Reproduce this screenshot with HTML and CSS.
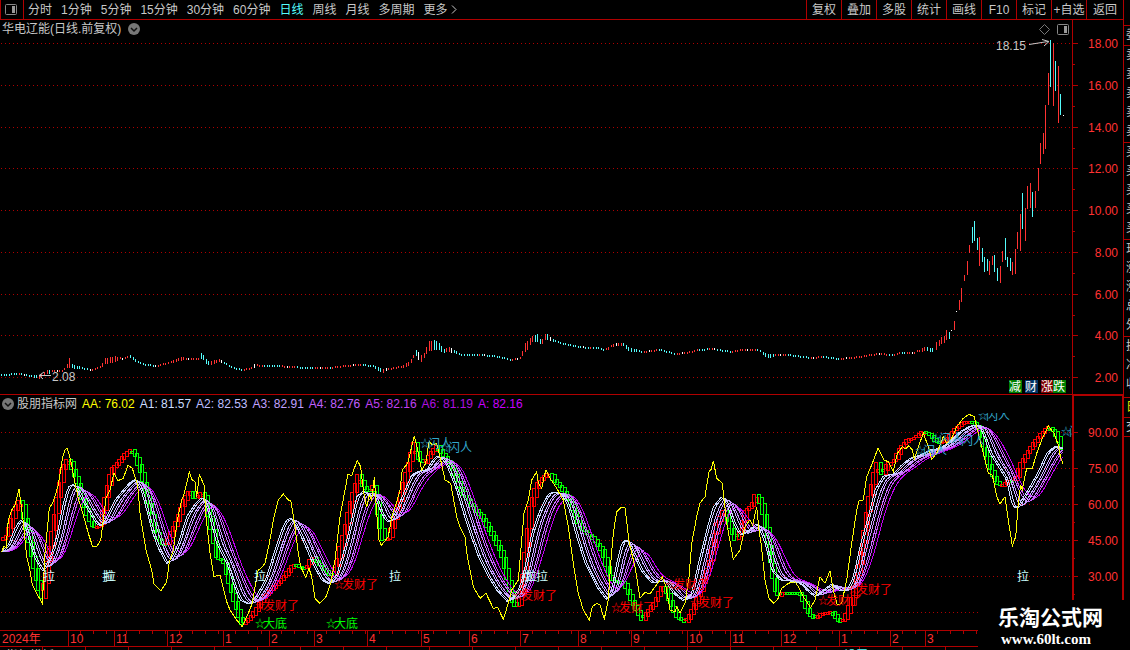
FILE: index.html
```
<!DOCTYPE html>
<html lang="zh-CN">

<head>
    <meta charset="UTF-8">
    <meta name="viewport" content="width=device-width, initial-scale=1.0">
    <title>华电辽能 日线</title>
    <link rel="stylesheet" href="styles.css">
</head>

<body>
    <div class="app">
        <main class="main">
            <nav class="toolbar">
                <button class="layout-btn" aria-label="布局">
                    <svg width="12" height="11" viewBox="0 0 12 11"><rect x="0.5" y="0.5" width="11" height="10" rx="1" fill="none" stroke="#888"/><rect x="7" y="2" width="3" height="7" fill="#999"/></svg>
                </button>
                <div class="periods">
                    <button>分时</button>
                    <button>1分钟</button>
                    <button>5分钟</button>
                    <button>15分钟</button>
                    <button>30分钟</button>
                    <button>60分钟</button>
                    <button class="active">日线</button>
                    <button>周线</button>
                    <button>月线</button>
                    <button>多周期</button>
                    <button class="more">更多<svg width="6" height="9" viewBox="0 0 6 9"><path d="M1 0.5 L5 4.5 L1 8.5" fill="none" stroke="#c8c8c8"/></svg></button>
                </div>
                <div class="tools">
                    <button>复权</button>
                    <button>叠加</button>
                    <button>多股</button>
                    <button>统计</button>
                    <button>画线</button>
                    <button>F10</button>
                    <button>标记</button>
                    <button>+自选</button>
                    <button>返回</button>
                </div>
            </nav>

            <section class="pane price">
                <div class="plot-col">
                    <header class="pane-title">
                        <span>华电辽能(日线.前复权)</span>
                        <svg class="fold" width="12" height="12" viewBox="0 0 12 12"><circle cx="6" cy="6" r="6" fill="#777"/><path d="M3 5 L6 8 L9 5" fill="none" stroke="#111" stroke-width="1.5"/></svg>
                        <span class="corner">
                            <svg width="11" height="11" viewBox="0 0 11 11"><path d="M5.5 0.5 L10.5 5.5 L5.5 10.5 L0.5 5.5 Z" fill="none" stroke="#777"/></svg>
                            <svg width="12" height="11" viewBox="0 0 12 11"><rect x="0.5" y="0.5" width="11" height="10" rx="1" fill="none" stroke="#888"/><rect x="7" y="2" width="3" height="7" fill="#999"/></svg>
                        </span>
                    </header>
                    <svg id="priceChart" class="price-chart" viewBox="0 38 1072 356" preserveAspectRatio="none"></svg>
                </div>
                <svg id="priceAxis" class="axis" viewBox="1072 20 51 374" preserveAspectRatio="none"></svg>
            </section>

            <section class="pane indicator">
                <div class="plot-col">
                    <header class="pane-title">
                        <svg class="fold" width="12" height="12" viewBox="0 0 12 12"><circle cx="6" cy="6" r="6" fill="#777"/><path d="M3 5 L6 8 L9 5" fill="none" stroke="#111" stroke-width="1.5"/></svg>
                        <span class="name">股朋指标网</span>
                        <span class="aa">AA: 76.02</span>
                        <span class="a1">A1: 81.57</span>
                        <span class="a2">A2: 82.53</span>
                        <span class="a3">A3: 82.91</span>
                        <span class="a4">A4: 82.76</span>
                        <span class="a5">A5: 82.16</span>
                        <span class="a6">A6: 81.19</span>
                        <span class="a7">A: 82.16</span>
                    </header>
                    <svg id="waveChart" class="wave-chart" viewBox="0 413 1072 217" preserveAspectRatio="none"></svg>
                </div>
                <svg id="waveAxis" class="axis" viewBox="1072 395 51 235" preserveAspectRatio="none"></svg>
            </section>

            <div class="dates" id="dates"></div>
            <footer class="status"><span>指标模板</span><span class="link">设置</span></footer>
        </main>

        <aside class="quote">
            <div class="q1">委比</div>
            <div class="q5"><span>卖五</span><span>卖四</span><span>卖三</span><span>卖二</span><span>卖一</span></div>
            <div class="q5"><span>买一</span><span>买二</span><span>买三</span><span>买四</span><span>买五</span></div>
            <div class="q5"><span>现价</span><span>涨跌</span><span>涨幅</span><span>总量</span><span>外盘</span></div>
            <div class="q3"><span>换手</span><span>净资</span><span>收益</span></div>
            <div class="q1 day">日</div>
            <div class="q1 last">交</div>
        </aside>
    </div>

    <div class="watermark">
        <strong>乐淘公式网</strong>
        <span>www.60lt.com</span>
    </div>

    <script src="chart.js"></script>
</body>

</html>
```
FILE: styles.css
```
body {
    margin: 0;
    background-color: #000;
    color: #c8c8c8;
    font-family: "Liberation Sans", "Noto Sans CJK SC", sans-serif;
    font-size: 12px;
    line-height: 18px;
    overflow: hidden;
}

button {
    border: 0;
    padding: 0;
    background: none;
    color: #c8c8c8;
    font: inherit;
    white-space: nowrap;
}

svg {
    display: block;
}

.app {
    display: flex;
    height: 100vh;
    overflow: hidden;
}

.main {
    flex: 1;
    min-width: 0;
    display: flex;
    flex-direction: column;
}

/* toolbar */
.toolbar {
    display: flex;
    height: 19px;
    flex: none;
    border-bottom: 1px solid #b00000;
}

.layout-btn {
    width: 24px;
    box-sizing: border-box;
    border-left: 1px solid #b00000;
    border-right: 1px solid #b00000;
    padding-left: 4px;
}

.periods {
    display: flex;
    flex: 1;
    gap: 9px;
    padding-left: 4px;
}

.periods .active {
    color: #54fcfc;
}

.periods .more {
    display: flex;
    align-items: center;
    gap: 3px;
}

.tools {
    display: flex;
}

.tools button {
    width: 35px;
    box-sizing: border-box;
    border-left: 1px solid #b00000;
}

.tools button:last-child {
    width: 37px;
}

/* panes */
.pane {
    display: flex;
    flex: none;
}

.plot-col {
    flex: 1;
    min-width: 0;
}

.pane-title {
    display: flex;
    align-items: center;
    height: 18px;
    gap: 5px;
    padding: 0 3px 0 2px;
    white-space: nowrap;
}

.corner {
    display: flex;
    gap: 7px;
    margin-left: auto;
}

.price {
    border-bottom: 1px solid #b00000;
}

.price .pane-title {
    gap: 7px;
}

.price-chart {
    width: 100%;
    height: 356px;
}

.wave-chart {
    width: 100%;
    height: 217px;
}

.axis {
    flex: none;
    width: 51px;
}

.price .axis {
    height: 374px;
}

.indicator .axis {
    height: 235px;
}

.indicator .fold {
    margin-right: -2px;
}

.aa { color: #ffff00; }
.a1 { color: #ccddff; }
.a2 { color: #bfbfff; }
.a3 { color: #c0a0ff; }
.a4 { color: #c060ff; }
.a5 { color: #c040f0; }
.a6 { color: #b010e0; }
.a7 { color: #c800ff; }

.chart-text {
    font-size: 12px;
}

.star {
    font-size: 10px;
}

/* date row */
.dates {
    display: flex;
    flex: none;
    height: 15px;
    line-height: 17px;
    border-top: 1px solid #b00000;
    border-bottom: 1px solid #b00000;
    color: #ff3030;
}

.dates span {
    flex-basis: 0;
    min-width: 0;
    text-indent: 2px;
    box-shadow: inset 1px 0 #b00000;
    white-space: nowrap;
    background: repeating-linear-gradient(90deg, transparent 0 12px, #b00000 12px 13px) 0 0 / 100% 3px no-repeat;
}

.dates span:first-child {
    box-shadow: none;
    background: none;
}

.status {
    display: flex;
    gap: 790px;
    flex: 1;
    padding-left: 6px;
    line-height: 18px;
    overflow: hidden;
    background: repeating-linear-gradient(90deg, transparent 0 42px, #b00000 42px 43px);
}

.status .link {
    color: #54fcfc;
}

/* quote strip */
.quote {
    flex: none;
    width: 6px;
    padding-top: 25px;
    border-left: 1px solid #b00000;
    overflow: hidden;
}

.quote div {
    display: flex;
    flex-direction: column;
    box-sizing: border-box;
    width: 60px;
    padding-left: 2px;
    border-top: 1px solid #b00000;
}

.q1 {
    height: 20px;
}

.q5 {
    height: 97px;
    line-height: 19px;
}

.q3 {
    height: 61px;
    line-height: 19px;
}

.quote .day {
    color: #e0e000;
}

.quote .last {
    border-bottom: 1px solid #b00000;
}

/* site mark over the corner */
.watermark {
    position: absolute;
    right: 0;
    bottom: 0;
    width: 138px;
    height: 44px;
    padding: 6px 0 0 14px;
    background-color: #000;
    color: #fff;
}

.watermark strong {
    display: block;
    margin-left: 6px;
    font-size: 21px;
    line-height: 24px;
}

.watermark span {
    display: block;
    margin-left: 9px;
    font-family: "Liberation Serif", serif;
    font-size: 15px;
    line-height: 18px;
    font-weight: bold;
}
```
FILE: chart.js
```
const RED = '#ff3232';
const CYAN = '#54fcfc';
const GRID = '#b00000';

// control points of the flat part of the price: x, y, half height
const trend = [
    [1, 375, 1], [20, 374, 1], [32, 376, 1], [40, 377, 2], [47, 372, 2], [62, 371, 1], [67, 366, 2], [69, 363, 5], [72, 366, 2], [85, 369, 1],
    [93, 370, 1], [100, 367, 1], [105, 361, 3], [115, 359, 3], [122, 359, 1], [130, 357, 2], [137, 361, 1], [145, 365, 1],
    [158, 366, 1], [170, 362, 1], [182, 359, 2], [190, 359, 1], [198, 359, 1], [201, 356, 3], [208, 363, 2], [220, 361, 2],
    [230, 367, 1], [242, 370, 1], [252, 368, 1], [255, 366, 3], [258, 366, 1], [275, 366, 1], [290, 367, 1], [310, 368, 1],
    [330, 368, 1], [345, 366, 1], [360, 365, 1], [372, 366, 1], [378, 369, 2], [381, 372, 3], [390, 369, 1], [400, 367, 1],
    [408, 364, 2], [412, 360, 2], [415, 352, 2], [417, 355, 5], [420, 360, 4], [424, 356, 3], [428, 346, 5], [434, 345, 5],
    [438, 346, 4], [444, 351, 2], [450, 350, 3], [460, 355, 1], [480, 355, 1], [500, 357, 1], [510, 360, 1], [520, 358, 1],
    [524, 349, 5], [528, 344, 4], [533, 338, 3], [537, 338, 4], [541, 342, 2], [546, 337, 4], [552, 341, 2], [560, 343, 1],
    [580, 347, 1], [590, 348, 1], [597, 348, 1], [604, 350, 1], [615, 345, 2], [623, 345, 2], [628, 349, 2], [642, 352, 1],
    [660, 350, 1], [675, 354, 1], [687, 353, 1], [697, 350, 1], [713, 349, 1], [730, 352, 1], [743, 350, 1], [758, 350, 1],
    [767, 356, 2], [787, 355, 1], [810, 358, 1], [823, 357, 1], [838, 359, 1], [860, 357, 1], [877, 354, 1], [893, 355, 1],
    [900, 353, 1], [913, 353, 1], [925, 349, 2], [934, 350, 2]
];

// the big candles: x, top, bottom, colour
const candles = [
    [936, 342, 350, 'r'], [939, 340, 346, 'r'], [941, 337, 344, 'r'], [944, 336, 343, 'r'], [946, 330, 340, 'r'],
    [949, 332, 339, 'c'], [951, 330, 331, 'w'], [954, 321, 330, 'r'], [956, 311, 312, 'w'], [959, 300, 310, 'r'],
    [961, 288, 302, 'r'], [964, 275, 281, 'r'], [967, 261, 275, 'r'], [969, 245, 253, 'r'], [972, 227, 243, 'c'],
    [974, 221, 241, 'c'], [977, 238, 250, 'c'], [979, 237, 266, 'r'], [982, 248, 262, 'c'], [984, 257, 272, 'c'],
    [987, 259, 271, 'c'], [989, 261, 275, 'r'], [992, 256, 265, 'r'], [994, 255, 272, 'c'], [997, 268, 281, 'c'],
    [1000, 266, 283, 'r'], [1002, 251, 262, 'r'], [1005, 238, 260, 'c'], [1007, 257, 267, 'c'], [1010, 258, 271, 'c'],
    [1012, 262, 275, 'r'], [1015, 249, 274, 'r'], [1017, 232, 249, 'r'], [1020, 214, 251, 'r'], [1022, 193, 229, 'c'],
    [1025, 208, 241, 'r'], [1027, 186, 209, 'r'], [1030, 183, 208, 'r'], [1032, 192, 217, 'c'], [1035, 191, 208, 'r'],
    [1038, 168, 191, 'r'], [1040, 143, 164, 'r'], [1043, 133, 154, 'r'], [1045, 105, 149, 'r'], [1048, 73, 105, 'r'],
    [1050, 40, 87, 'c'], [1053, 43, 106, 'r'], [1055, 61, 91, 'c'], [1058, 66, 123, 'r'], [1060, 94, 115, 'c'],
    [1063, 115, 116, 'w']
];

// every curve is kept as four strips; offsets of a strip, then its points in thirds of a pixel
function join(strips) {
    const out = [];
    strips.forEach(([dx, dy, pts]) => {
        pts.trim().split(/\s+/).forEach(p => {
            const [x, y] = p.split(',').map(Number);
            out.push([dx + x / 3, dy + y / 3]);
        });
    });
    return out;
}

const yellow = join([
    [0, 420, '5,395 12,378 18,385 25,300 35,270 45,255 57,208 68,290 80,410 88,440 97,495 110,520 127,550 135,400 148,265 160,245 175,195 188,110 195,90 202,85 212,120 222,175 235,235 250,285 265,340 278,380 290,380 302,360 310,300 318,235 330,210 342,160 354,182 370,175 384,136 397,145 413,195 420,280 438,390 455,450 462,492 483,512 500,485 508,425 520,390 532,300 545,240 553,220 568,157 575,178 585,185 590,232 598,163 612,195 618,290 630,400 642,470 660,465 680,545 690,570 710,600 727,620 745,580 757,550 765,500 775,450'],
    [260, 420, '3,445 15,430 28,370 42,290 55,240 70,222 85,240 92,240 105,320 115,400 122,440 137,472 147,445 155,470 165,535 180,550 198,530 212,490 225,420 240,290 255,210 264,163 275,167 292,121 302,140 310,210 320,262 328,225 335,240 343,172 350,280 357,360 364,376 385,350 395,290 412,240 420,210 427,150 443,130 455,80 463,48 473,90 485,150 497,130 507,65 517,75 530,70 542,120 555,180 572,190 590,290 600,320 615,350 622,410 640,500 660,535 678,520 700,565 713,562 730,598 745,550'],
    [510, 420, '5,510 15,495 25,480 35,360 42,280 55,240 65,180 80,155 85,190 95,205 101,175 108,150 120,175 140,205 160,240 175,320 190,430 205,520 220,570 238,600 247,560 260,550 270,555 283,597 295,540 302,430 310,340 320,275 333,262 345,263 358,370 375,440 390,535 405,517 420,522 435,500 457,472 468,500 480,570 495,575 500,560 510,578 525,550 537,470 545,370 560,290 570,250 585,230 597,155 604,148 610,122 620,175 637,190 650,310 670,418 690,390 705,320 720,300 728,315 740,260 748,340'],
    [760, 400, '2,420 15,540 27,595 42,610 55,595 65,565 85,550 105,545 118,565 130,590 152,623 165,600 180,530 195,550 210,513 220,570 232,615 245,610 260,540 275,430 290,330 297,302 310,300 320,230 335,195 354,145 372,180 385,185 400,215 412,160 427,140 437,147 446,137 457,150 463,178 475,140 490,100 505,140 515,178 530,160 550,110 560,130 575,115 590,80 610,55 627,43 643,50 655,100 670,160 685,220 697,225 710,290 720,312 735,290 745,360 757,437 767,410 775,310 782,255 787,268 800,205 817,205 830,160 845,120 865,78 882,100 895,135 902,175 910,193']
]);

const first = join([
    [0, 420, '5,395 25,375 45,325 62,298 75,315 90,370 105,415 128,455 140,430 155,400 170,350 190,250 205,200 220,193 235,215 250,245 270,280 290,312 305,318 320,290 345,240 370,210 390,187 408,178 425,215 440,270 455,330 475,385 500,432 515,415 535,370 560,290 585,252 607,230 625,275 650,370 680,430 700,490 720,540 745,553 765,535'],
    [260, 420, '5,500 20,470 45,390 65,330 80,300 93,295 110,320 135,375 160,435 185,480 207,492 230,465 250,400 270,320 290,230 310,213 330,228 345,225 360,270 378,303 390,305 410,270 435,210 455,165 480,152 500,150 515,125 530,108 545,115 560,135 590,210 620,310 655,410 685,470 710,510 742,545'],
    [510, 420, '10,530 30,500 50,420 65,340 90,270 115,222 130,217 155,222 175,260 200,350 225,430 260,500 290,540 305,510 320,430 335,370 350,358 365,390 395,455 425,488 465,482 490,520 520,543 545,520 570,410 590,330 610,260 635,230 650,250 670,310 690,345 710,335 730,320 740,310'],
    [760, 400, '0,390 15,430 35,510 60,540 90,543 120,550 145,575 165,590 190,570 215,552 240,572 262,570 280,530 300,440 330,330 345,270 370,228 400,222 425,195 450,175 480,165 510,150 540,145 570,125 600,95 630,78 650,75 665,90 690,160 715,200 740,240 755,310 768,328 785,300 810,260 835,215 860,160 885,138 908,147']
]);

const body = join([
    [0, 420, '5,358 12,350 22,345 30,310 45,260 62,232 70,280 85,350 100,430 115,500 128,540 140,430 155,340 170,240 185,150 205,110 220,155 240,210 260,280 280,325 300,315 310,260 320,210 335,145 355,125 375,100 392,88 405,105 425,165 445,250 460,315 480,370 498,372 512,335 530,300 550,240 570,205 585,240 608,212 620,250 635,330 650,415 670,420 690,500 705,550 725,612 742,600 760,580'],
    [260, 420, '5,535 40,500 70,470 100,430 125,443 140,440 155,408 180,435 215,470 230,430 250,340 275,230 295,160 308,195 320,210 335,215 343,185 355,280 370,360 385,355 400,300 420,230 440,150 462,65 475,115 490,130 510,100 530,75 545,100 570,130 600,205 630,250 665,290 700,350 725,400 745,490'],
    [510, 420, '5,540 20,565 30,530 45,400 60,260 80,190 100,170 118,155 130,180 155,205 180,245 210,320 245,350 275,390 300,480 340,485 365,540 395,600 410,575 430,550 460,490 480,545 500,590 525,607 545,570 570,510 600,420 620,310 640,265 655,310 675,360 690,340 705,270 725,255 740,212 748,250'],
    [760, 400, '2,310 15,370 35,510 50,590 70,575 120,577 145,640 165,655 180,640 215,633 240,670 255,655 275,590 300,480 325,300 350,185 365,225 385,185 400,185 420,140 445,115 465,112 490,92 510,105 530,128 555,120 580,90 610,65 635,62 655,85 680,180 705,240 720,258 745,240 765,240 780,190 805,150 830,115 865,78 885,95 910,160']
]);

function valueAt(pts, x, k = 1) {
    if (x <= pts[0][0]) return pts[0][k];
    for (let i = 1; i < pts.length; i++) {
        if (x <= pts[i][0]) {
            const a = pts[i - 1], b = pts[i];
            return a[k] + (b[k] - a[k]) * (x - a[0]) / (b[0] - a[0]);
        }
    }
    return pts[pts.length - 1][k];
}

function gridLines(ys, width) {
    return ys.map(y => `<line x1="1" y1="${y + 0.5}" x2="${width}" y2="${y + 0.5}" stroke="${GRID}" stroke-dasharray="1 3"/>`).join('');
}

function label(x, y, text, color) {
    return `<text class="chart-text" x="${x}" y="${y}" fill="${color}">${text}</text>`;
}

function starLabel(x, y, text, color) {
    return `<text class="star" x="${x}" y="${y - 1}" fill="${color}">☆</text>` + label(x + 8, y, text, color);
}

function drawPrice() {
    let s = `<g shape-rendering="crispEdges">` + gridLines([43, 85, 127, 168, 210, 252, 294, 335, 377], 1072);
    for (let i = 0; i < 370; i++) {
        const x = Math.round(1 + i * 2.53);
        if (x > 934) break;
        const y = valueAt(trend, x), h = valueAt(trend, x, 2);
        const slope = valueAt(trend, x + 2) - valueAt(trend, x - 2);
        const n = (i * 7919) % 13;
        let color = slope < -0.3 ? RED : slope > 0.3 ? CYAN : (n % 2 ? RED : CYAN);
        if (n === 5) color = '#fff';
        s += `<rect x="${x}" y="${Math.round(y - h)}" width="1" height="${Math.max(2, Math.round(h * 2) - (n % 2))}" fill="${color}"/>`;
    }
    candles.forEach(([x, top, bottom, c]) => {
        const color = c === 'r' ? RED : c === 'c' ? CYAN : '#fff';
        s += `<rect x="${x}" y="${top}" width="1" height="${bottom - top}" fill="${color}"/>`;
    });
    s += '</g>';
    // high and low marks
    s += label(996, 50, '18.15', '#c8c8c8') + '<path d="M1029 44.5 L1048 41.5 M1042 39.5 L1049 41.5 L1044 46" fill="none" stroke="#c8c8c8"/>';
    s += label(52, 381, '2.08', '#c8c8c8') + '<path d="M51 375.5 H39 M44 372 L39 375.5 L43 379" fill="none" stroke="#c8c8c8"/>';
    [[1009, '减', '#008000'], [1025, '财', '#003366'], [1041, '涨', '#800000'], [1053, '跌', '#008000']].forEach(([x, t, bg]) => {
        s += `<rect x="${x}" y="380" width="13" height="13" fill="${bg}"/>` + label(x, 391, t, '#fff');
    });
    document.getElementById('priceChart').innerHTML = s;
}

function drawWave() {
    let s = `<g shape-rendering="crispEdges" fill="none">` + gridLines([432, 468, 504, 540, 576, 612], 1072);
    // hollow boxes, red while rising and green while falling
    for (let x = 4; x < 1064; x += 2.53) {
        const a = valueAt(body, x - 5), b = valueAt(body, x);
        const color = b < a ? '#ff0000' : '#00ff00';
        s += `<rect x="${Math.round(x) - 2.5}" y="${Math.round(Math.min(a, b)) + 0.5}" width="3" height="${Math.max(2, Math.round(Math.abs(a - b)))}" stroke="${color}"/>`;
    }
    // each following line is a longer, later average of the first one
    const colors = ['#ccddff', '#ccccff', '#c8b0ff', '#c890ff', '#c870ff', '#c850f8', '#c000f0'];
    const spans = [1, 2, 4, 5, 7, 8, 10];
    for (let k = 6; k >= 0; k--) {
        let d = '';
        for (let x = 1; x <= 1063; x += 2) {
            let sum = 0;
            for (let j = 0; j < spans[k]; j++) sum += valueAt(first, x - k * 0.7 - j * 2.5);
            d += (d ? 'L' : 'M') + x + ' ' + (sum / spans[k]).toFixed(1);
        }
        s += `<path d="${d}" stroke="${colors[k]}"/>`;
    }
    s += `<polyline points="${yellow.map(p => p.map(v => v.toFixed(1)).join(',')).join(' ')}" stroke="#ffff00"/></g>`;

    [43, 102, 104, 254, 389, 521, 525, 536, 1017].forEach(x => { s += label(x, 581, '拉', '#ccffff'); });
    [[255, 610], [334, 589], [513, 600], [611, 612], [665, 589], [690, 607], [818, 605], [848, 594]].forEach(([x, y]) => {
        s += starLabel(x, y, '发财了', '#ff0000');
    });
    [[255, 628], [326, 628]].forEach(([x, y]) => { s += starLabel(x, y, '大底', '#00ff00'); });
    [[420, 448], [440, 452], [915, 455], [931, 443], [953, 445], [978, 420], [1061, 436]].forEach(([x, y]) => {
        s += starLabel(x, y, '闪人', '#33a8cc');
    });
    document.getElementById('waveChart').innerHTML = s;
}

function drawAxis(id, ticks, minor, top, bottom, w) {
    let s = `<g shape-rendering="crispEdges" fill="${GRID}"><rect x="1072" y="${top}" width="${w}" height="${bottom - top}"/>`;
    if (w > 1) {
        s += `<rect x="1072" y="${top}" width="51" height="1"/><rect x="1122" y="${top}" width="1" height="${bottom - top}"/>`;
    }
    ticks.forEach(([y]) => {
        s += `<rect x="1072" y="${y}" width="6" height="1"/><rect x="1072" y="${y + minor}" width="3" height="1"/>`;
    });
    s += '</g>';
    ticks.forEach(([y, t]) => {
        s += `<text class="chart-text" x="1118" y="${y + 5}" text-anchor="end" fill="${RED}">${t}</text>`;
    });
    document.getElementById(id).innerHTML = s;
}

function drawDates() {
    const starts = [0, 68, 114, 167, 223, 269, 314, 367, 421, 469, 520, 578, 631, 687, 730, 781, 839, 890, 925, 1123];
    const names = ['2024年', 10, 11, 12, 1, 2, 3, 4, 5, 6, 7, 8, 9, 10, 11, 12, 1, 2, 3];
    document.getElementById('dates').innerHTML = names.map((n, i) =>
        `<span style="flex-grow: ${starts[i + 1] - starts[i]}">${n}</span>`).join('');
}

drawPrice();
drawWave();
drawAxis('priceAxis', [[43, '18.00'], [85, '16.00'], [127, '14.00'], [168, '12.00'], [210, '10.00'], [252, '8.00'], [294, '6.00'], [335, '4.00'], [377, '2.00']], 21, 20, 394, 1);
drawAxis('waveAxis', [[432, '90.00'], [468, '75.00'], [504, '60.00'], [540, '45.00'], [576, '30.00']], 18, 395, 630, 2);
drawDates();
```
